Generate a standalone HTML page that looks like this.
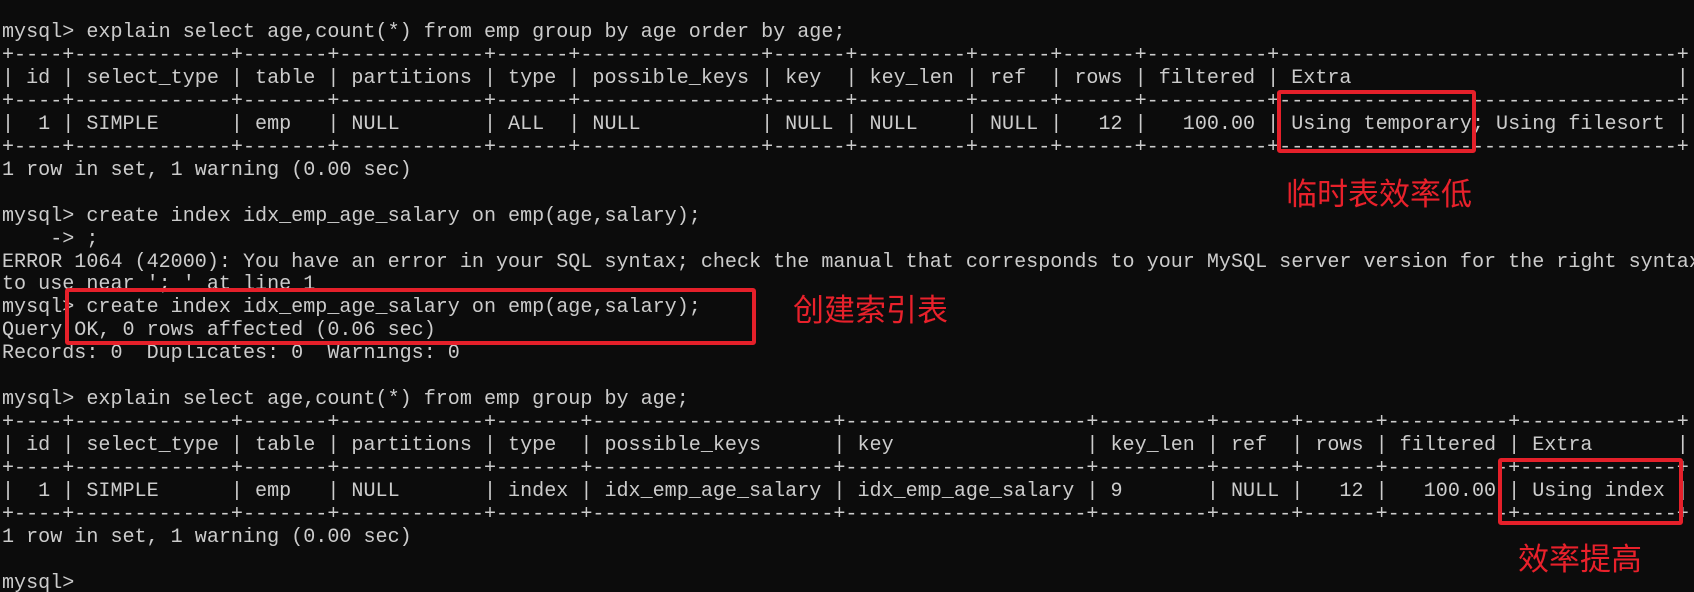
<!DOCTYPE html>
<html><head><meta charset="utf-8"><style>
html,body{margin:0;padding:0;background:#0c0c0c;width:1694px;height:592px;overflow:hidden;position:relative}
pre{position:absolute;left:2px;top:22px;margin:0;font-family:"Liberation Mono",monospace;font-size:20.08px;line-height:22.95px;color:#cccccc;white-space:pre}
.box{position:absolute;border:4px solid #e5202a;border-radius:3px;box-sizing:border-box}
.lbl{position:absolute;color:#e8212b;font-family:"Noto Sans CJK SC","WenQuanYi Zen Hei",sans-serif;font-size:31px;line-height:31px;white-space:nowrap}
</style></head><body>
<pre>mysql&gt; explain select age,count(*) from emp group by age order by age;
+----+-------------+-------+------------+------+---------------+------+---------+------+------+----------+---------------------------------+
| id | select_type | table | partitions | type | possible_keys | key  | key_len | ref  | rows | filtered | Extra                           |
+----+-------------+-------+------------+------+---------------+------+---------+------+------+----------+---------------------------------+
|  1 | SIMPLE      | emp   | NULL       | ALL  | NULL          | NULL | NULL    | NULL |   12 |   100.00 | Using temporary; Using filesort |
+----+-------------+-------+------------+------+---------------+------+---------+------+------+----------+---------------------------------+
1 row in set, 1 warning (0.00 sec)

mysql&gt; create index idx_emp_age_salary on emp(age,salary);
    -&gt; ;
ERROR 1064 (42000): You have an error in your SQL syntax; check the manual that corresponds to your MySQL server version for the right syntax
to use near '; ' at line 1
mysql&gt; create index idx_emp_age_salary on emp(age,salary);
Query OK, 0 rows affected (0.06 sec)
Records: 0  Duplicates: 0  Warnings: 0

mysql&gt; explain select age,count(*) from emp group by age;
+----+-------------+-------+------------+-------+--------------------+--------------------+---------+------+------+----------+-------------+
| id | select_type | table | partitions | type  | possible_keys      | key                | key_len | ref  | rows | filtered | Extra       |
+----+-------------+-------+------------+-------+--------------------+--------------------+---------+------+------+----------+-------------+
|  1 | SIMPLE      | emp   | NULL       | index | idx_emp_age_salary | idx_emp_age_salary | 9       | NULL |   12 |   100.00 | Using index |
+----+-------------+-------+------------+-------+--------------------+--------------------+---------+------+------+----------+-------------+
1 row in set, 1 warning (0.00 sec)

mysql&gt;</pre>
<div class="box" style="left:1277px;top:90px;width:199px;height:63px"></div>
<div class="lbl" style="left:1286px;top:176px">临时表效率低</div>
<div class="box" style="left:65px;top:288px;width:691px;height:57px"></div>
<div class="lbl" style="left:793px;top:292px">创建索引表</div>
<div class="box" style="left:1498px;top:458px;width:185px;height:67px"></div>
<div class="lbl" style="left:1518px;top:541px">效率提高</div>
</body></html>
